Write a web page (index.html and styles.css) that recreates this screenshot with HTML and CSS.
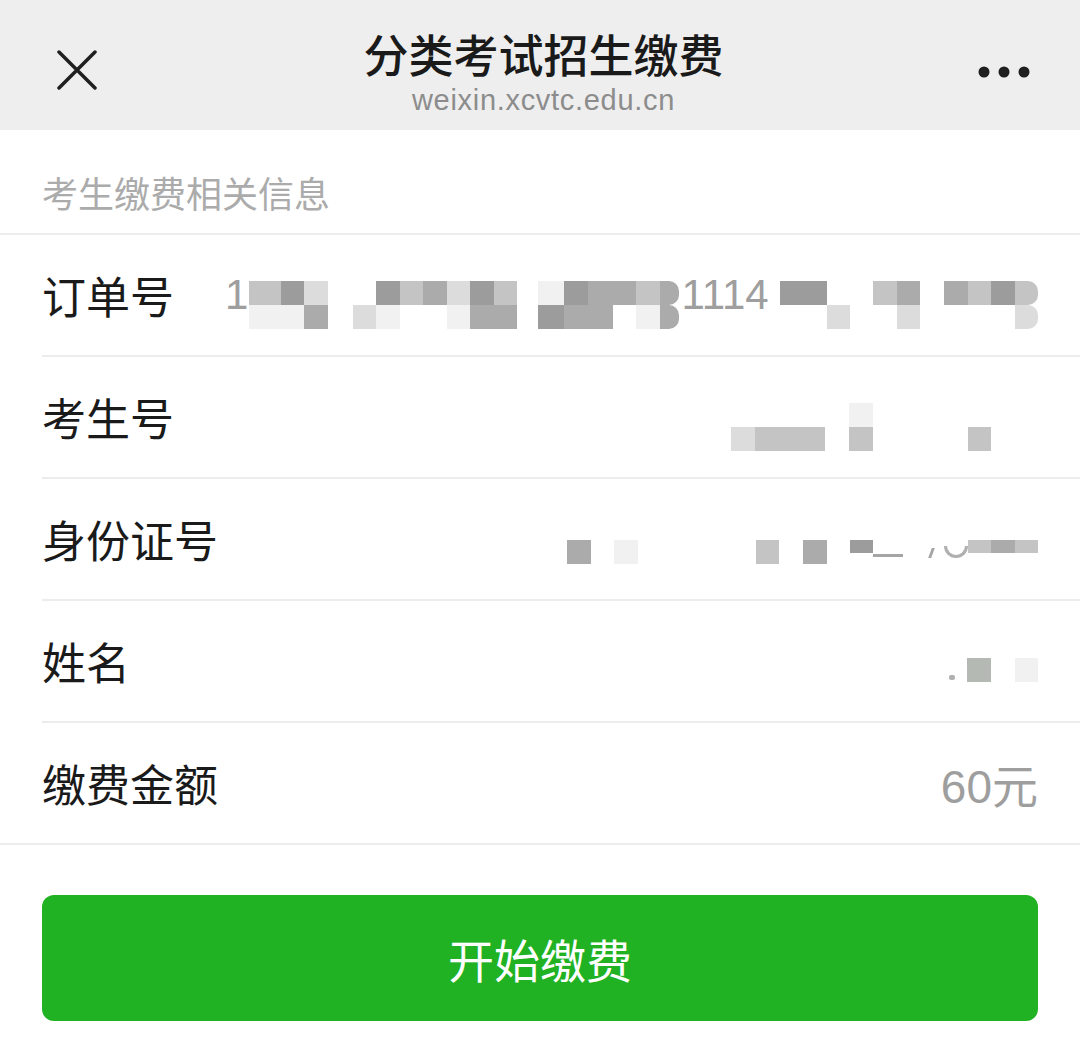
FILE: index.html
```html
<!DOCTYPE html>
<html lang="zh-CN">
<head>
    <meta charset="UTF-8">
    <meta name="viewport" content="width=device-width, initial-scale=1.0">
    <title>分类考试招生缴费</title>
    <link rel="stylesheet" href="styles.css">
</head>
<body>

<!-- 顶部导航 -->
<header class="navbar">
    <div class="nav-left">
        <svg class="icon-close" viewBox="0 0 40 40" width="40" height="40">
            <path d="M2 2 L38 38 M38 2 L2 38" fill="none" stroke="#1f1f1f" stroke-width="3.5" stroke-linecap="round"/>
        </svg>
    </div>
    <div class="nav-title">
        <div class="title">分类考试招生缴费</div>
        <div class="domain">weixin.xcvtc.edu.cn</div>
    </div>
    <div class="nav-right">
        <svg class="icon-more" viewBox="0 0 52 12" width="52" height="12">
            <circle cx="6" cy="6" r="5.5" fill="#1f1f1f"/>
            <circle cx="26" cy="6" r="5.5" fill="#1f1f1f"/>
            <circle cx="46" cy="6" r="5.5" fill="#1f1f1f"/>
        </svg>
    </div>
</header>

<div class="section-title">考生缴费相关信息</div>

<div class="info-list">
    <!-- 订单号 -->
    <div class="info-row">
        <span class="label">订单号</span>
        <span class="value">
            <span class="peek w24">1</span>
            <span class="mask">
                <span class="col w8"><i class="k3"></i><i class="k5"></i></span>
                <span class="col"><i class="k3"></i><i class="k5"></i></span>
                <span class="col"><i class="k1"></i><i class="k5"></i></span>
                <span class="col"><i class="k4"></i><i class="k2"></i></span>
                <span class="col w25"></span>
                <span class="col"><i></i><i class="k4"></i></span>
                <span class="col"><i class="k1"></i><i class="k5"></i></span>
                <span class="col"><i class="k3"></i><i></i></span>
                <span class="col"><i class="k2"></i><i></i></span>
                <span class="col"><i class="k4"></i><i class="k5"></i></span>
                <span class="col"><i class="k1"></i><i class="k2"></i></span>
                <span class="col"><i class="k3"></i><i class="k2"></i></span>
                <span class="col w21"></span>
                <span class="col w26"><i class="k5"></i><i class="k1"></i></span>
                <span class="col"><i class="k1"></i><i class="k2"></i></span>
                <span class="col w25"><i class="k2"></i><i class="k2"></i></span>
                <span class="col"><i class="k2"></i><i></i></span>
                <span class="col"><i class="k3"></i><i class="k5"></i></span>
                <span class="col w19 round"><i class="k2"></i><i class="k2"></i></span>
            </span>
            <span class="peek w101">1114</span>
            <span class="mask">
                <span class="col"><i class="k1"></i><i></i></span>
                <span class="col"><i class="k1"></i><i></i></span>
                <span class="col"><i></i><i class="k4"></i></span>
                <span class="col w23"></span>
                <span class="col"><i class="k3"></i><i></i></span>
                <span class="col"><i class="k2"></i><i class="k4"></i></span>
                <span class="col w24"></span>
                <span class="col"><i class="k2"></i><i></i></span>
                <span class="col"><i class="k3"></i><i></i></span>
                <span class="col"><i class="k1"></i><i></i></span>
                <span class="col round"><i class="k3"></i><i class="k4"></i></span>
            </span>
        </span>
    </div>

    <!-- 考生号 -->
    <div class="info-row">
        <span class="label">考生号</span>
        <span class="value">
            <span class="mask">
                <span class="col"><i></i><i class="k4"></i></span>
                <span class="col"><i></i><i class="k3"></i></span>
                <span class="col"><i></i><i class="k3"></i></span>
                <span class="col"><i></i><i class="k3"></i></span>
                <span class="col w24"></span>
                <span class="col"><i class="k5"></i><i class="k3"></i></span>
                <span class="col w95"></span>
                <span class="col"><i></i><i class="k3"></i></span>
                <span class="col w47"></span>
            </span>
        </span>
    </div>

    <!-- 身份证号 -->
    <div class="info-row">
        <span class="label">身份证号</span>
        <span class="value">
            <span class="mask single">
                <span class="col"><i class="k2"></i></span>
                <span class="col w23"></span>
                <span class="col w24"><i class="k5"></i></span>
                <span class="col w118"></span>
                <span class="col"><i class="k3"></i></span>
                <span class="col w24"></span>
                <span class="col"><i class="k2"></i></span>
                <span class="col w23"></span>
                <span class="col"><i class="k1 half"></i></span>
                <span class="col w47"><i class="dash"></i></span>
                <span class="col w24"><i class="slash"></i></span>
                <span class="col"><i class="arc"></i></span>
                <span class="col"><i class="k3 half"></i></span>
                <span class="col"><i class="k2 half"></i></span>
                <span class="col"><i class="k3 half"></i></span>
            </span>
        </span>
    </div>

    <!-- 姓名 -->
    <div class="info-row">
        <span class="label">姓名</span>
        <span class="value">
            <span class="mask single name">
                <span class="col w18"><i class="dot"></i></span>
                <span class="col"><i class="kg"></i></span>
                <span class="col w24"></span>
                <span class="col"><i class="k5"></i></span>
            </span>
        </span>
    </div>

    <!-- 缴费金额 -->
    <div class="info-row">
        <span class="label">缴费金额</span>
        <span class="value amount">60元</span>
    </div>
</div>

<div class="btn-wrap">
    <button class="btn-pay">开始缴费</button>
</div>

</body>
</html>
```

FILE: styles.css
```css
body {
    margin: 0;
    padding: 0;
    background-color: #fff;
    font-family: "Liberation Sans", "Noto Sans CJK SC", sans-serif;
    color: #1a1a1a;
}

/* 导航栏 */
.navbar {
    display: grid;
    grid-template-columns: 1fr auto 1fr;
    align-items: start;
    height: 130px;
    box-sizing: border-box;
    padding: 33px 50px 0 57px;
    background-color: #eeeeee;
}

.nav-left {
    margin-top: 17px;
}

.icon-close {
    display: block;
}

.nav-title {
    text-align: center;
}

.nav-title .title {
    font-size: 45px;
    font-weight: 500;
    line-height: 50px;
    color: #1a1a1a;
}

.nav-title .domain {
    margin-top: 2px;
    font-size: 29px;
    line-height: 30px;
    letter-spacing: 0.7px;
    color: #8c8c8c;
}

.nav-right {
    justify-self: end;
    margin-top: 33px;
}

.icon-more {
    display: block;
}

/* 分组标题 */
.section-title {
    display: flex;
    align-items: center;
    height: 105px;
    box-sizing: border-box;
    padding: 20px 42px 0;
    border-bottom: 2px solid #ececec;
    font-family: "Noto Sans CJK SC", sans-serif;
    font-size: 36px;
    color: #ababab;
}

/* 信息列表 */
.info-list {
    border-bottom: 2px solid #ececec;
}

.info-row {
    display: flex;
    align-items: center;
    height: 120px;
    margin-left: 42px;
    padding-right: 42px;
    border-bottom: 2px solid #ececec;
}

.info-row:last-child {
    border-bottom: none;
}

.info-row .label {
    font-family: "Noto Sans CJK SC", sans-serif;
    font-size: 44px;
    color: #1a1a1a;
    white-space: nowrap;
}

.info-row .value {
    margin-left: auto;
    display: flex;
    align-items: center;
    font-size: 42px;
    color: #9e9e9e;
}

.value.amount {
    font-size: 46px;
}

.peek {
    display: block;
    white-space: nowrap;
    line-height: 48px;
    box-sizing: border-box;
}

.peek.w24 { width: 24px; }
.peek.w101 { width: 101px; padding-left: 3px; }

/* 打码马赛克 */
.mask {
    display: flex;
    margin-top: 20px;
}

.mask.single {
    margin-top: 26px;
}

.mask.name {
    margin-top: 18px;
}

.mask .col {
    display: flex;
    flex-direction: column;
    width: 23.5px;
    flex-shrink: 0;
}

.mask .col i {
    display: block;
    height: 24px;
}

.mask .col.round i {
    border-radius: 0 10px 10px 0;
}

.col.w8 { width: 8px; }
.col.w18 { width: 18px; }
.col.w19 { width: 19px; }
.col.w21 { width: 21px; }
.col.w23 { width: 23px; }
.col.w24 { width: 24px; }
.col.w25 { width: 25px; }
.col.w26 { width: 26px; }
.col.w47 { width: 47px; }
.col.w95 { width: 95px; }
.col.w118 { width: 118px; }

.k1 { background-color: #9c9c9c; }
.k2 { background-color: #ababab; }
.k3 { background-color: #c4c4c4; }
.k4 { background-color: #dcdcdc; }
.k5 { background-color: #f1f1f1; }
.kg { background-color: #b4b9b4; }

.mask .col i.half {
    height: 13px;
}

.mask .col i.dash {
    height: 3px;
    width: 30px;
    margin-top: 14px;
    background-color: #a5a5a5;
}

.mask .col i.slash {
    width: 3px;
    height: 10px;
    margin: 8px 0 0 10px;
    background-color: #a5a5a5;
    transform: skewX(-20deg);
}

.mask .col i.arc {
    height: 12px;
    margin-top: 6px;
    box-sizing: border-box;
    border: 3px solid #b0b0b0;
    border-top: none;
    border-radius: 0 0 12px 12px;
}

.mask .col i.dot {
    width: 6px;
    height: 5px;
    margin-top: 17px;
    border-radius: 2px;
    background-color: #b0b0b0;
}

/* 缴费按钮 */
.btn-wrap {
    padding: 50px 42px 0;
}

.btn-pay {
    display: block;
    width: 100%;
    height: 126px;
    border: none;
    border-radius: 12px;
    background-color: #20b223;
    color: #fff;
    font-family: "Noto Sans CJK SC", sans-serif;
    font-size: 46px;
    cursor: pointer;
}
```
